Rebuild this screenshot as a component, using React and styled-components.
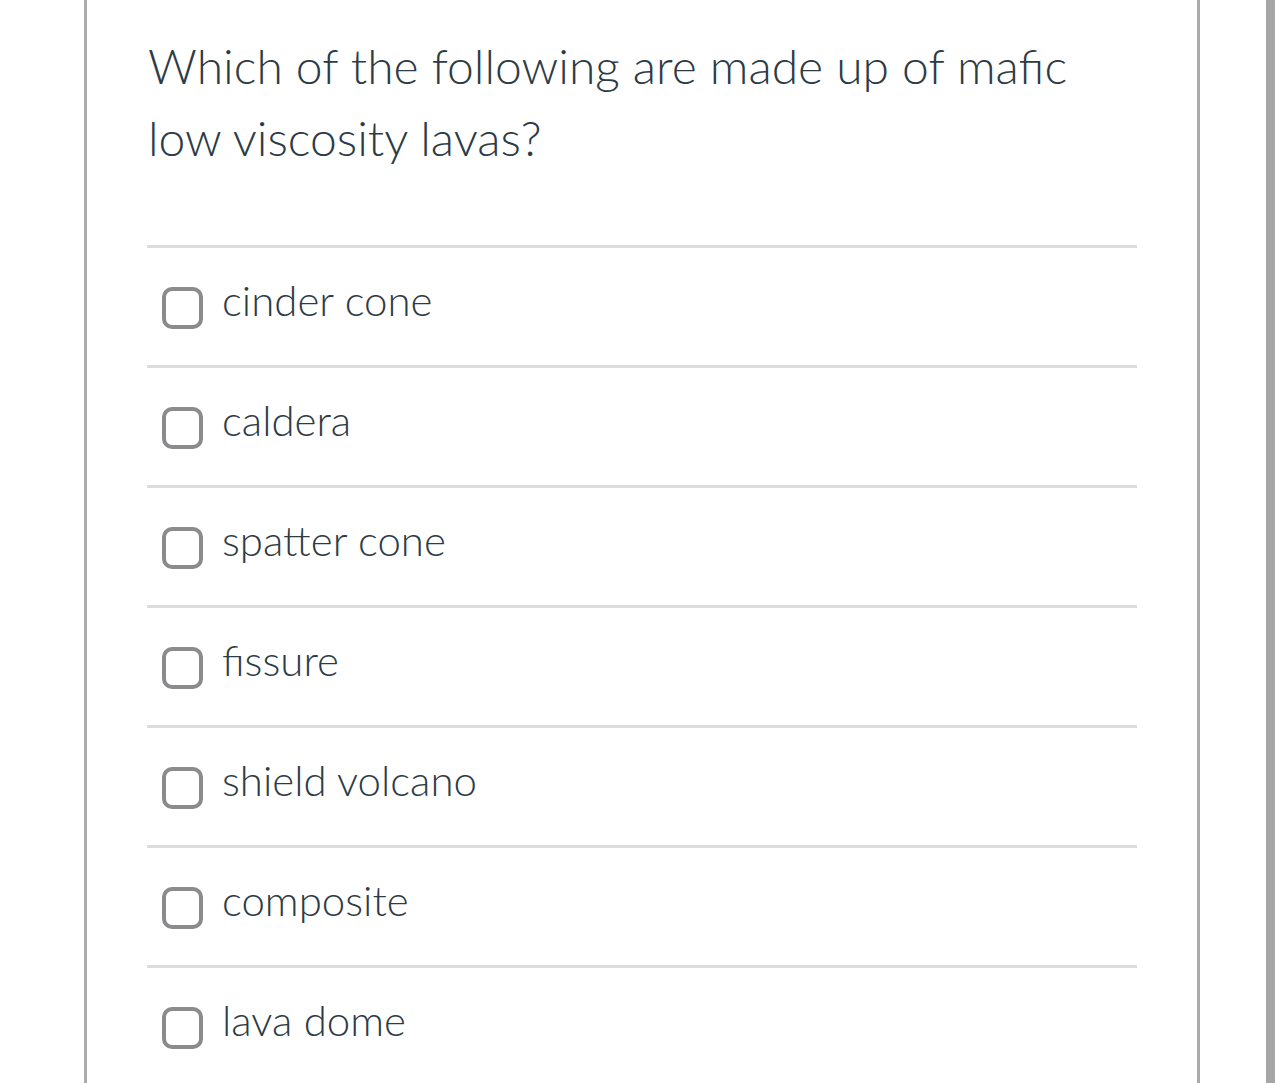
import styled, { createGlobalStyle } from 'styled-components';

const GlobalStyle = createGlobalStyle`
  html, body {
    margin: 0;
    padding: 0;
    background: #fff;
    font-family: "Lato Light", Lato, "Open Sans", sans-serif;
    overflow: hidden;
  }
`;

const Page = styled.div`
  display: flex;
  height: 1083px;
  padding-left: 84px;
  box-sizing: border-box;
`;

const Card = styled.div`
  width: 1116px;
  box-sizing: border-box;
  border-left: 3px solid #ababab;
  border-right: 3px solid #ababab;
  padding: 30px 60px 0 60px;
  overflow: hidden;
`;

const Question = styled.div`
  font-size: 48px;
  line-height: 72px;
  font-weight: 300;
  color: #2d3b45;
  padding-left: 1px;
  margin-bottom: 71px;
`;

const Answers = styled.div`
  display: flex;
  flex-direction: column;
`;

const Row = styled.label`
  display: flex;
  align-items: center;
  height: 117px;
  border-top: 3px solid #dcdcdc;
  padding-left: 15px;
  gap: 19px;
  cursor: pointer;
`;

const Box = styled.span`
  flex: none;
  width: 41px;
  height: 42px;
  box-sizing: border-box;
  border: 4px solid #8b8b8d;
  border-radius: 10px;
  margin-top: 3px;
  background: #fff;
`;

const Label = styled.span`
  font-size: 42px;
  font-weight: 300;
  color: #2d3b45;
  margin-bottom: 13px;
`;

const ScrollTrack = styled.div`
  margin-left: 66px;
  width: 9px;
  background: #a6a6a6;
`;

const options = [
  'cinder cone',
  'caldera',
  'spatter cone',
  'fissure',
  'shield volcano',
  'composite',
  'lava dome',
];

export default function App() {
  return (
    <>
      <GlobalStyle />
      <Page>
        <Card>
          <Question>
            Which of the following are made up of mafic low viscosity lavas?
          </Question>
          <Answers>
            {options.map((o) => (
              <Row key={o}>
                <Box />
                <Label>{o}</Label>
              </Row>
            ))}
          </Answers>
        </Card>
        <ScrollTrack />
      </Page>
    </>
  );
}
